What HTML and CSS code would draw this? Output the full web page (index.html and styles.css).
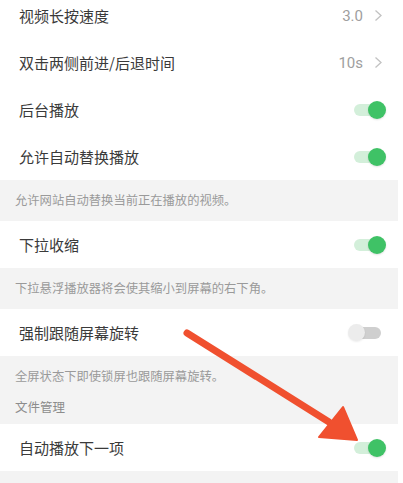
FILE: index.html
```html
<html>
  <head>
    <meta charset="utf-8">
    <link rel="stylesheet" href="styles.css">
  </head>
  <body>
    <div id="page">
      <div class="row first">
        <span class="label">视频长按速度</span>
        <span class="value">3.0</span>
        <svg class="chevron" width="9" height="13" viewBox="0 0 9 13"><polyline points="1.5,1.5 7,6.5 1.5,11.5" fill="none" stroke="#c2c2c2" stroke-width="1.3"/></svg>
      </div>
      <div class="row">
        <span class="label">双击两侧前进/后退时间</span>
        <span class="value">10s</span>
        <svg class="chevron" width="9" height="13" viewBox="0 0 9 13"><polyline points="1.5,1.5 7,6.5 1.5,11.5" fill="none" stroke="#c2c2c2" stroke-width="1.3"/></svg>
      </div>
      <div class="row">
        <span class="label">后台播放</span>
        <div class="toggle on"><div class="knob"></div></div>
      </div>
      <div class="row">
        <span class="label">允许自动替换播放</span>
        <div class="toggle on"><div class="knob"></div></div>
      </div>
      <div class="note">允许网站自动替换当前正在播放的视频。</div>
      <div class="row">
        <span class="label">下拉收缩</span>
        <div class="toggle on"><div class="knob"></div></div>
      </div>
      <div class="note">下拉悬浮播放器将会使其缩小到屏幕的右下角。</div>
      <div class="row">
        <span class="label">强制跟随屏幕旋转</span>
        <div class="toggle off"><div class="knob"></div></div>
      </div>
      <div class="note tight">全屏状态下即使锁屏也跟随屏幕旋转。</div>
      <div class="section">文件管理</div>
      <div class="row">
        <span class="label">自动播放下一项</span>
        <div class="toggle on"><div class="knob"></div></div>
      </div>
      <div class="note"></div>
    </div>

    <!-- red arrow drawn over the list -->
    <svg id="arrow" width="403" height="483" viewBox="0 0 403 483">
      <line x1="187" y1="333" x2="329" y2="422" stroke="#f0502f" stroke-width="7" stroke-linecap="round"/>
      <polygon points="357,440 319,437 343,407" fill="#f0502f" stroke="#f0502f" stroke-width="2" stroke-linejoin="round"/>
    </svg>
  </body>
</html>
```

FILE: styles.css
```css
body {
  margin: 0;
  background-color: white;
  font-family: "Noto Sans CJK SC", "Noto Sans", sans-serif;
  overflow: hidden;
}

#page {
  width: 398px;
  margin-top: -8px;
}

.row {
  height: 47px;
  display: flex;
  align-items: center;
  padding: 0 12px 0 19px;
  background-color: white;
}

.label {
  flex: 1;
  font-size: 15px;
  color: #3a3a3a;
}

.value {
  font-family: "Roboto", "Noto Sans", sans-serif;
  font-size: 15px;
  color: #9e9e9e;
  margin-right: 11px;
}

.chevron {
  margin-right: 3px;
}

.toggle {
  position: relative;
  width: 32px;
  height: 18px;
}

.toggle .knob {
  position: absolute;
  top: 0;
  width: 18px;
  height: 18px;
  border-radius: 9px;
}

.toggle.on:before {
  content: "";
  position: absolute;
  left: 0;
  top: 3px;
  width: 26px;
  height: 12px;
  border-radius: 6px;
  background-color: #d3efda;
}

.toggle.on .knob {
  right: 0;
  background-color: #3fc266;
  box-shadow: 0 1px 2px rgba(0, 0, 0, 0.12);
}

.toggle.off {
  margin-right: 6px;
}

.toggle.off:before {
  content: "";
  position: absolute;
  left: 6px;
  top: 3px;
  width: 27px;
  height: 12px;
  border-radius: 6px;
  background-color: #cfcfcf;
}

.toggle.off .knob {
  left: 0;
  width: 17px;
  height: 17px;
  background-color: #ececec;
  box-shadow: 0 1px 2px rgba(0, 0, 0, 0.08);
}

.note {
  background-color: #f3f3f3;
  font-size: 12.3px;
  color: #9a9a9a;
  padding: 0 15px;
  height: 41px;
  line-height: 41px;
}

.note.tight {
  height: 36px;
  line-height: 40px;
}

.section {
  background-color: #f3f3f3;
  font-size: 12.5px;
  color: #8c8c8c;
  padding: 0 15px;
  height: 32px;
  line-height: 30px;
}

#arrow {
  position: absolute;
  left: 0;
  top: 0;
}
```
